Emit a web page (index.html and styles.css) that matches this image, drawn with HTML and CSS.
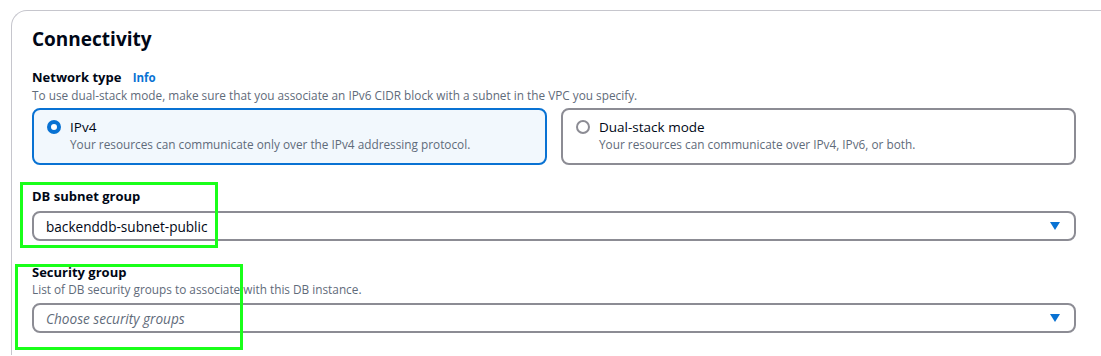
FILE: index.html
```html
<!DOCTYPE html>
<html lang="en">
<head>
  <meta charset="UTF-8">
  <title>Connectivity</title>
  <link rel="stylesheet" href="styles.css">
</head>
<body>
  <div class="panel">
    <h2 class="panel-title">Connectivity</h2>

    <div class="field">
      <div class="field-label">
        Network type
        <a href="#" class="info-link">Info</a>
      </div>
      <div class="field-desc">To use dual-stack mode, make sure that you associate an IPv6 CIDR block with a subnet in the VPC you specify.</div>
      <div class="tiles">
        <div class="tile tile-selected">
          <span class="radio radio-on"></span>
          <div class="tile-text">
            <div class="tile-title">IPv4</div>
            <div class="tile-desc">Your resources can communicate only over the IPv4 addressing protocol.</div>
          </div>
        </div>
        <div class="tile">
          <span class="radio"></span>
          <div class="tile-text">
            <div class="tile-title">Dual-stack mode</div>
            <div class="tile-desc">Your resources can communicate over IPv4, IPv6, or both.</div>
          </div>
        </div>
      </div>
    </div>

    <div class="field field-subnet">
      <div class="field-label">DB subnet group</div>
      <div class="select">
        <span class="select-value">backenddb-subnet-public</span>
        <svg class="caret" width="10" height="8" viewBox="0 0 10 8"><path d="M0 0h10L5 8z" fill="#0972d3"/></svg>
      </div>
    </div>

    <div class="field field-security">
      <div class="field-label">Security group</div>
      <div class="field-desc">List of DB security groups to associate with this DB instance.</div>
      <div class="select">
        <span class="select-placeholder">Choose security groups</span>
        <svg class="caret" width="10" height="8" viewBox="0 0 10 8"><path d="M0 0h10L5 8z" fill="#0972d3"/></svg>
      </div>
    </div>

    <div class="highlight highlight-subnet"></div>
    <div class="highlight highlight-security"></div>
  </div>
</body>
</html>
```

FILE: styles.css
```css
* {
  margin: 0;
  padding: 0;
  box-sizing: border-box;
}

body {
  width: 1101px;
  height: 356px;
  overflow: hidden;
  background: #ffffff;
  font-family: "Open Sans", "Noto Sans", sans-serif;
  color: #000716;
}

.panel {
  position: relative;
  margin: 10px 0 0 11px;
  width: 1100px;
  height: 345px;
  border-top: 1px solid #c6c6cd;
  border-left: 1px solid #c6c6cd;
  border-top-left-radius: 16px;
  padding: 16px 0 0 20px;
}

.panel-title {
  font-size: 19px;
  line-height: 24px;
  font-weight: 700;
}

.field {
  width: 1044px;
}

.field-label {
  margin-top: 17px;
  font-size: 13px;
  line-height: 18px;
  font-weight: 700;
}

.info-link {
  margin-left: 8px;
  font-size: 11.5px;
  color: #0972d3;
  text-decoration: none;
}

.field-desc {
  font-size: 11.8px;
  line-height: 16px;
  color: #5f6b7a;
}

.tiles {
  display: flex;
  gap: 14px;
  margin-top: 5px;
}

.tile {
  flex: 1;
  display: flex;
  gap: 9px;
  height: 57px;
  padding: 8px 14px 11px 13px;
  border: 2px solid #8c8c94;
  border-radius: 8px;
  background: #ffffff;
}

.tile-selected {
  border-color: #0972d3;
  background: #f2f8fd;
}

.radio {
  flex: none;
  width: 14px;
  height: 14px;
  margin-top: 2px;
  border: 2px solid #8c8c94;
  border-radius: 50%;
  background: #ffffff;
}

.radio-on {
  border: 4px solid #0972d3;
}

.tile-title {
  font-size: 13.5px;
  line-height: 18px;
}

.tile-desc {
  font-size: 11.8px;
  line-height: 16px;
  color: #5f6b7a;
}

.field-subnet .field-label {
  margin-top: 22px;
}

.field-security .field-label {
  margin-top: 22px;
}

.select {
  display: flex;
  align-items: center;
  justify-content: space-between;
  height: 30px;
  margin-top: 6px;
  padding: 0 14px 0 12px;
  border: 2px solid #8c8c94;
  border-radius: 8px;
  font-size: 13.6px;
}

.select-placeholder {
  font-style: italic;
  color: #5f6b7a;
}

.highlight {
  position: absolute;
  border: 3px solid #19ff19;
}

.highlight-subnet {
  left: 8px;
  top: 171px;
  width: 198px;
  height: 66px;
}

.highlight-security {
  left: 3px;
  top: 253px;
  width: 228px;
  height: 86px;
}
```
